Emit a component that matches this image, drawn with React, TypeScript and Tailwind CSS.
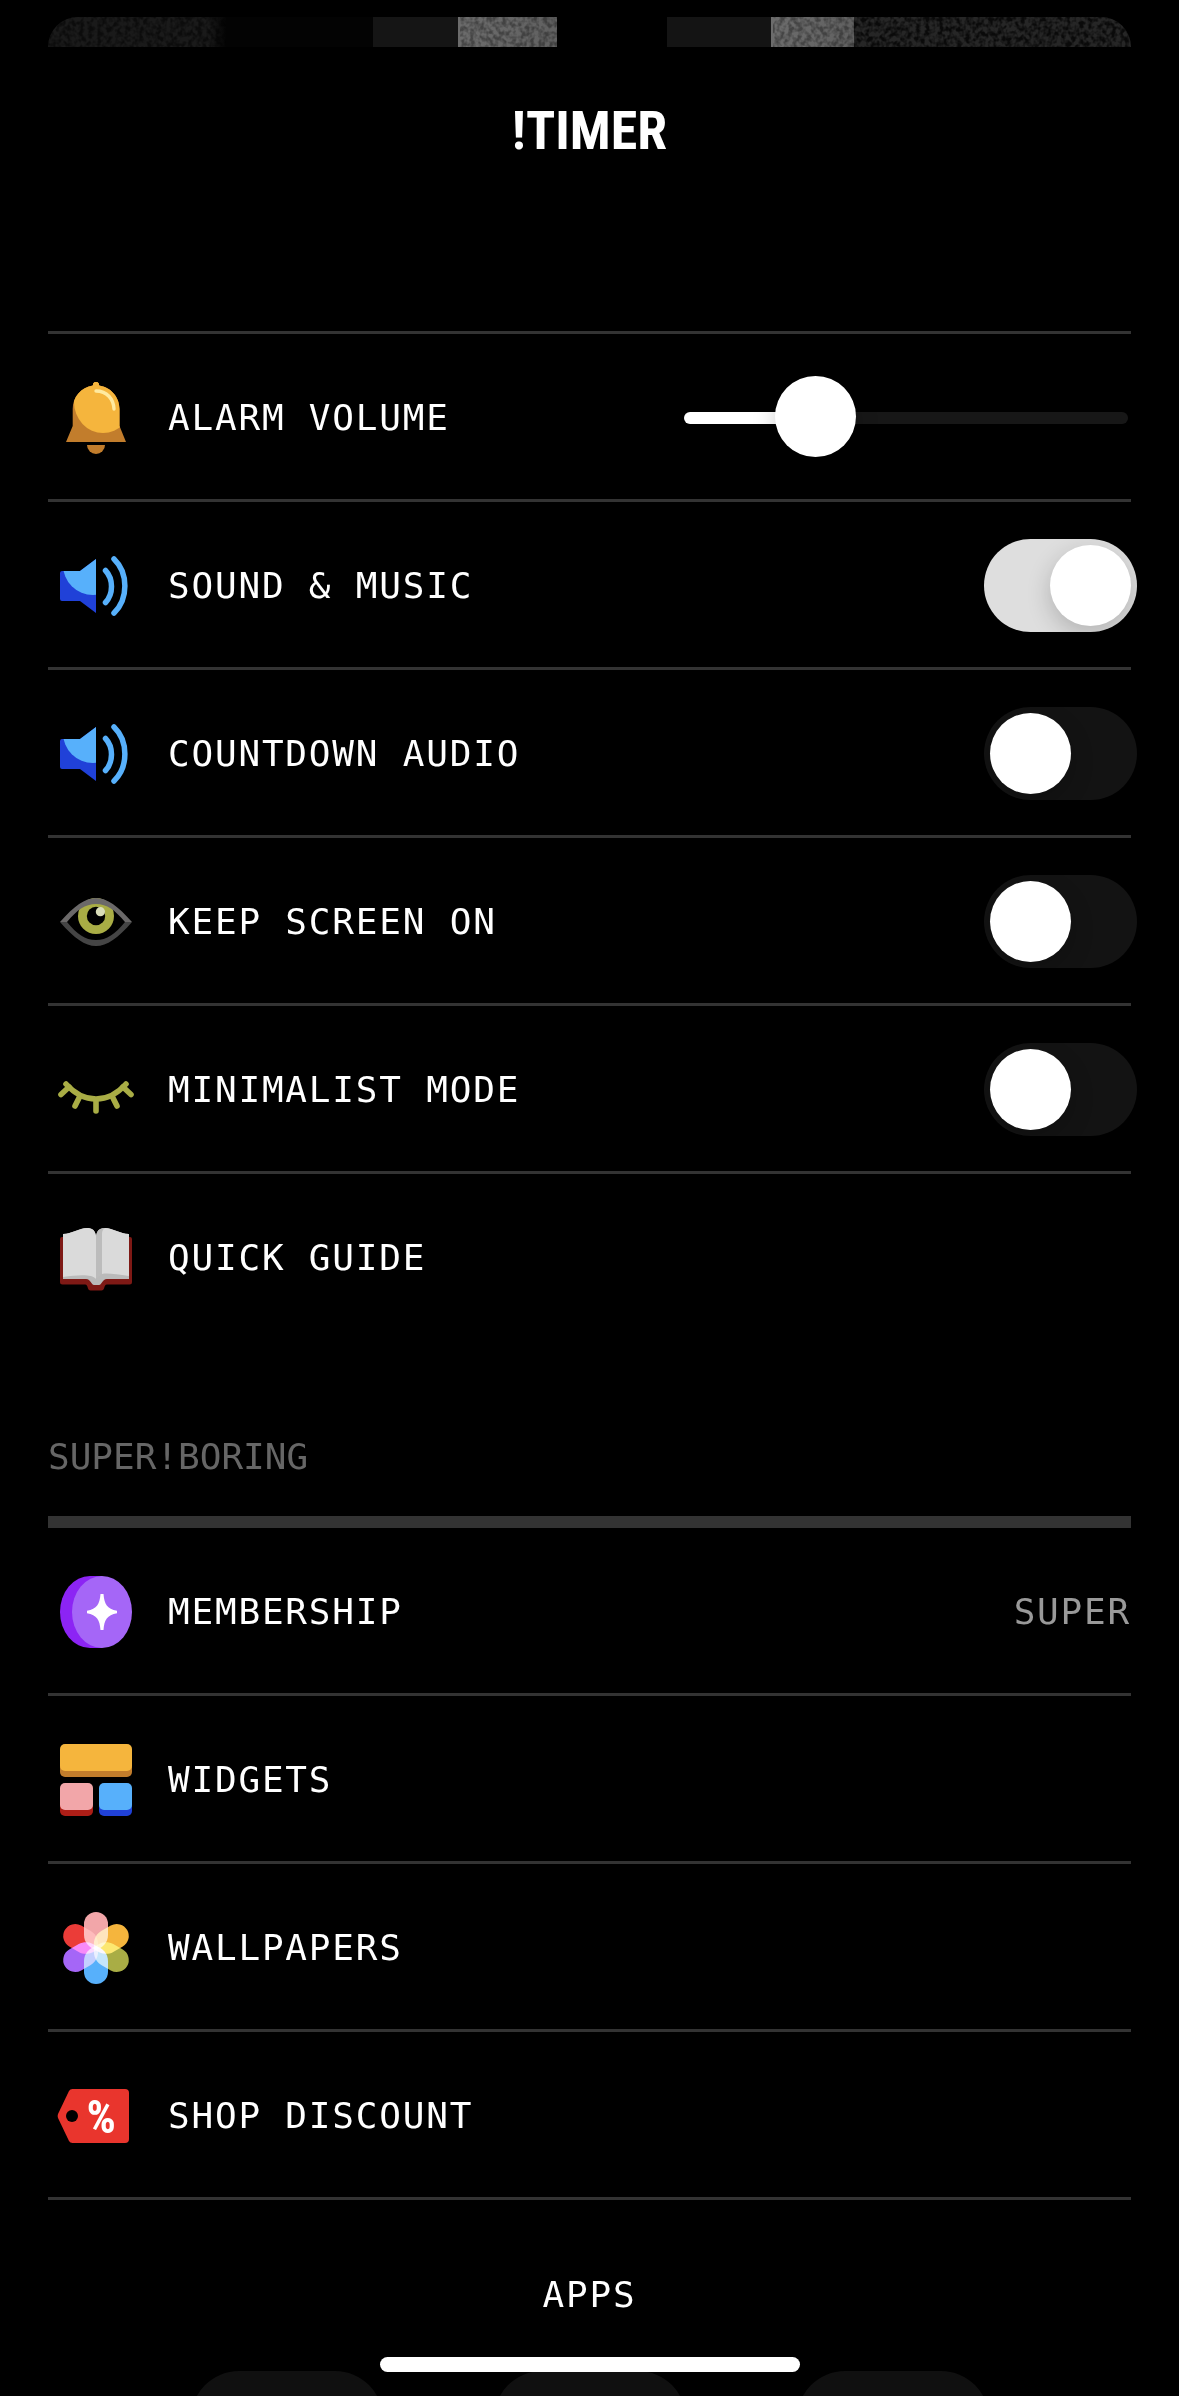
import React, { useId, useState } from 'react';

interface IconProps {
  children: React.ReactNode;
}

const Icon = ({ children }: IconProps) => (
  <svg viewBox="0 0 72 72" fill="none" aria-hidden="true" className="size-[72px] shrink-0 overflow-visible">
    {children}
  </svg>
);

const BellIcon = () => (
  <Icon>
    <clipPath id="bell-body">
      <path d="M36 0a3.2 3.2 0 0 1 3 3.4C51 5 59.500 15 59.500 27V44L66 60H6L12.700 44V27C12.700 15 21 5 33 3.400A3.200 3.200 0 0 1 36 0Z" />
    </clipPath>
    <g clipPath="url(#bell-body)">
      <rect width="72" height="60" fill="#c27d2c" />
      <ellipse cx="43" cy="20" rx="29" ry="31" fill="#f5b53d" />
      <circle cx="36" cy="3" r="4" fill="#f5b53d" />
    </g>
    <path d="M36 9C47 9 53.500 17 54 27" stroke="#ffeaa0" strokeWidth="3.400" strokeLinecap="round" />
    <path d="M27 63h18a9 9 0 0 1-18 0Z" fill="#c27d2c" />
  </Icon>
);

const SpeakerIcon = () => (
  <Icon>
    <clipPath id="speaker-body">
      <path d="M2 21H20L36 9V63L20 51H2a2 2 0 0 1-2-2V23a2 2 0 0 1 2-2Z" />
    </clipPath>
    <g clipPath="url(#speaker-body)">
      <rect width="36" height="72" fill="#2041d8" />
      <circle cx="33" cy="15" r="30" fill="#57b0fb" />
    </g>
    <path d="M45.500 20.500C53.500 29 53.500 44 45.500 52.500" stroke="#57b0fb" strokeWidth="5.500" strokeLinecap="round" />
    <path d="M54 9C68.500 23 68.500 49 54 63" stroke="#57b0fb" strokeWidth="5.500" strokeLinecap="round" />
  </Icon>
);

const EyeIcon = () => (
  <Icon>
    <circle cx="36" cy="30" r="18" fill="#a9ad45" />
    <circle cx="36" cy="30" r="9.200" fill="#000" />
    <circle cx="40.400" cy="25.700" r="4.600" fill="#d9ddb8" />
    <path d="M0 36C14 20 25 12 36 12S58 20 72 36H65C55 24 47 18 36 18S17 24 7 36Z" fill="#6b6969" />
    <path d="M0 36C14 52 25 60 36 60S58 52 72 36H65C55 48 47 54 36 54S17 48 7 36Z" fill="#454545" />
  </Icon>
);

const LashesIcon = () => (
  <Icon>
    <g stroke="#a9ad45" strokeWidth="5.600" strokeLinecap="round" strokeLinejoin="round">
      <path d="M6 30C14 39 24 45 36 45S58 39 66 30" />
      <path d="M1 40.500L9 33M71 40.500L63 33" />
      <path d="M15 52L19.500 43M57 52L52.500 43M36 46V57" />
    </g>
  </Icon>
);

const BookIcon = () => (
  <Icon>
    <path
      d="M2 15H70a2 2 0 0 1 2 2V60a2.500 2.500 0 0 1-2.500 2.500H47c-2 0-2 1-3 4q-.6 2-2.500 2H30.500q-2 0-2.500-2c-1-3-1-4-3-4H2.500A2.500 2.500 0 0 1 0 60V17a2 2 0 0 1 2-2Z"
      fill="#7e1915"
    />
    <path
      d="M3 12C12 12 19 6 27 6c5 0 8 2 9 8 1-6 4-8 9-8 8 0 15 6 24 6V57H47c-5 0-5 6-8 6H34c-3 0-3-6-8-6H3Z"
      fill="#bababa"
    />
    <path d="M3 12C12 12 19 6 27 6c5 0 8 2 9 8V57c-4-5-18-4-33-2Z" fill="#dadada" />
    <path d="M69 12C60 12 53 6 45 6c-2 0-3 1-3 3V52c5-1 14 0 27 2Z" fill="#dadada" />
    <path d="M36 14c1-6 4-8 9-8-2 1-3 3-3 6V52c-2 1-4 3-6 5Z" fill="#bcbcbc" />
  </Icon>
);

const SparkleIcon = () => (
  <Icon>
    <path d="M30 0H42V72H30A30 36 0 0 1 30 0Z" fill="#8c24f4" />
    <ellipse cx="42" cy="36" rx="30" ry="36" fill="#a566f7" />
    <path
      d="M40.500 18H43.500C44.300 28 47 33 57 34.700V37.300C47 39 44.300 44 43.500 54H40.500C39.700 44 37 39 27 37.300V34.700C37 33 39.700 28 40.500 18Z"
      fill="#fff"
    />
  </Icon>
);

const WidgetsIcon = () => (
  <Icon>
    <rect y="4" width="72" height="29" rx="5" fill="#c27d2c" />
    <rect width="72" height="27" rx="5" fill="#f5b53d" />
    <rect y="44" width="33" height="28" rx="5" fill="#ad1e17" />
    <rect y="39" width="33" height="27" rx="5" fill="#f2a6a9" />
    <rect x="39" y="44" width="33" height="28" rx="5" fill="#2041d8" />
    <rect x="39" y="39" width="33" height="27" rx="5" fill="#57b0fb" />
  </Icon>
);

const petals = [
  { angle: 0, color: '#f2a6a9' },
  { angle: 60, color: '#f5b53d' },
  { angle: 120, color: '#a9ad45' },
  { angle: 180, color: '#57b0fb' },
  { angle: 240, color: '#a566f7' },
  { angle: 300, color: '#eb3c38' },
];

const FlowerIcon = () => (
  <Icon>
    <g className="isolate">
      {petals.map((petal) => (
        <path
          key={petal.angle}
          className="mix-blend-screen"
          d="M24 12a12 12 0 0 1 24 0V23C48 31 42 36 36 38 30 36 24 31 24 23Z"
          fill={petal.color}
          transform={`rotate(${petal.angle} 36 36)`}
        />
      ))}
    </g>
  </Icon>
);

const TagIcon = () => (
  <Icon>
    <path
      d="M12.500 9H65a4 4 0 0 1 4 4V59a4 4 0 0 1-4 4H12.500q-2.500 0-3.500-2L-2 38q-.8-2 0-4L9 11q1-2 3.500-2Z"
      fill="#e9352d"
    />
    <circle cx="12" cy="36" r="6" fill="#000" />
    <text x="42" y="53" textAnchor="middle" fill="#fff" fontSize="46" fontWeight="700" fontFamily="'Roboto Condensed', Roboto, sans-serif">
      %
    </text>
  </Icon>
);

interface RowProps {
  icon: React.ReactNode;
  label: string;
  htmlFor?: string;
  children?: React.ReactNode;
}

const Row = ({ icon, label, htmlFor, children }: RowProps) => (
  <li className="flex h-[168px] items-center justify-between border-t-[3px] border-[#333] pt-0.5">
    {htmlFor ? (
      <label htmlFor={htmlFor} className="flex items-center gap-9 pl-3">
        {icon}
        <span>{label}</span>
      </label>
    ) : (
      <a href="#" className="flex flex-1 items-center gap-9 pl-3">
        {icon}
        <span>{label}</span>
      </a>
    )}
    {children}
  </li>
);

interface ToggleRowProps {
  icon: React.ReactNode;
  label: string;
  defaultOn?: boolean;
}

const ToggleRow = ({ icon, label, defaultOn = false }: ToggleRowProps) => {
  const id = useId();
  const [on, setOn] = useState<boolean>(defaultOn);

  return (
    <Row icon={icon} label={label} htmlFor={id}>
      <input
        id={id}
        type="checkbox"
        role="switch"
        checked={on}
        onChange={(e) => setOn(e.target.checked)}
        className="-mr-1.5 flex h-[93px] w-[153px] cursor-pointer appearance-none items-center overflow-hidden rounded-full bg-[#131313] p-1.5 transition-colors before:size-[81px] before:rounded-full before:bg-white before:shadow-[0_8px_24px_rgba(0,0,0,0.2)] before:transition-transform before:content-[''] checked:bg-[#dedede] checked:before:translate-x-[60px]"
      />
    </Row>
  );
};

const VolumeRow = () => {
  const [volume, setVolume] = useState<number>(25);

  return (
    <Row icon={<BellIcon />} label="ALARM VOLUME" htmlFor="alarm-volume">
      <input
        id="alarm-volume"
        type="range"
        min={0}
        max={100}
        value={volume}
        onChange={(e) => setVolume(Number(e.target.value))}
        style={{ '--fill': `${volume + 5}%` } as React.CSSProperties}
        className="mr-[3px] h-[81px] w-[444px] cursor-pointer appearance-none bg-transparent [&::-webkit-slider-runnable-track]:h-3 [&::-webkit-slider-runnable-track]:rounded-full [&::-webkit-slider-runnable-track]:bg-[linear-gradient(to_right,#fff_var(--fill),#171717_var(--fill))] [&::-webkit-slider-thumb]:-mt-9 [&::-webkit-slider-thumb]:size-[81px] [&::-webkit-slider-thumb]:appearance-none [&::-webkit-slider-thumb]:rounded-full [&::-webkit-slider-thumb]:bg-white [&::-webkit-slider-thumb]:shadow-[0_8px_24px_rgba(0,0,0,0.2)]"
      />
    </Row>
  );
};

// bottom edge of the hero artwork, the rest is scrolled out of view
const HeroEdge = () => (
  <div className="mx-12 mt-[17px] h-[30px] shrink-0 overflow-hidden rounded-t-[30px]">
    <svg viewBox="0 0 1083 30" preserveAspectRatio="none" aria-hidden="true" className="h-full w-full">
      <defs>
        <linearGradient id="fade">
          <stop offset="0" stopColor="#1a1a1a" />
          <stop offset="0.9" stopColor="#1a1a1a" />
          <stop offset="1" stopColor="#040404" />
        </linearGradient>
        <linearGradient id="sheen">
          <stop offset="0" stopColor="#6c6c6c" />
          <stop offset="1" stopColor="#606060" />
        </linearGradient>
        <filter id="grain" x="0" y="0" width="100%" height="100%">
          <feTurbulence type="fractalNoise" baseFrequency="0.22 0.2" numOctaves="2" seed="4" />
          <feColorMatrix values="0 0 0 0 0  0 0 0 0 0  0 0 0 0 0  0 0 0 3 -1.1" />
          <feComposite in2="SourceGraphic" operator="in" />
        </filter>
      </defs>
      <rect width="178" height="30" fill="url(#fade)" />
      <rect x="178" width="147" height="30" fill="#030303" />
      <rect x="325" width="87" height="30" fill="#151515" />
      <rect x="410" width="99" height="30" fill="url(#sheen)" />
      <rect x="619" width="106" height="30" fill="#141414" />
      <rect x="723" width="83" height="30" fill="url(#sheen)" />
      <rect x="806" width="277" height="30" fill="#262626" />
      <g filter="url(#grain)">
        <rect width="178" height="30" opacity="0.55" />
        <rect x="412" width="97" height="30" opacity="0.35" />
        <rect x="725" width="81" height="30" opacity="0.35" />
        <rect x="806" width="277" height="30" opacity="0.75" />
      </g>
    </svg>
  </div>
);

const App = () => {
  return (
    <div className="relative flex h-screen flex-col overflow-hidden bg-black font-['DejaVu_Sans_Mono',monospace] text-4xl leading-10 text-white">
      <HeroEdge />

      <header className="flex h-[284px] shrink-0 justify-center pt-14">
        <h1 className="font-['Liberation_Sans_Narrow','Roboto_Condensed','Open_Sans_Condensed','DejaVu_Sans_Condensed',sans-serif] text-[54px] leading-14 font-bold">
          !TIMER
        </h1>
      </header>

      <main className="px-12">
        <ul className="tracking-wider">
          <VolumeRow />
          <ToggleRow icon={<SpeakerIcon />} label="SOUND & MUSIC" defaultOn />
          <ToggleRow icon={<SpeakerIcon />} label="COUNTDOWN AUDIO" />
          <ToggleRow icon={<EyeIcon />} label="KEEP SCREEN ON" />
          <ToggleRow icon={<LashesIcon />} label="MINIMALIST MODE" />
          <Row icon={<BookIcon />} label="QUICK GUIDE" />
        </ul>

        <h2 className="mt-[98px] mb-[39px] text-[#666]">SUPER!BORING</h2>

        <ul className="border-t-[9px] border-b-[3px] border-[#333] tracking-wider">
          <Row icon={<SparkleIcon />} label="MEMBERSHIP">
            <span className="text-[#999]">SUPER</span>
          </Row>
          <Row icon={<WidgetsIcon />} label="WIDGETS" />
          <Row icon={<FlowerIcon />} label="WALLPAPERS" />
          <Row icon={<TagIcon />} label="SHOP DISCOUNT" />
        </ul>

        <h3 className="mt-[75px] mb-14 text-center tracking-wider">APPS</h3>

        <div className="flex justify-center gap-[111px]">
          <a href="#" aria-label="App one" className="size-48 rounded-[48px] bg-[#101010]" />
          <a href="#" aria-label="App two" className="size-48 rounded-[48px] bg-[#101010]" />
          <a href="#" aria-label="App three" className="size-48 rounded-[48px] bg-[#101010]" />
        </div>
      </main>

      {/* home indicator */}
      <div className="absolute bottom-6 left-1/2 h-[15px] w-[420px] -translate-x-1/2 rounded-full bg-white" />
    </div>
  );
};

export default App;
